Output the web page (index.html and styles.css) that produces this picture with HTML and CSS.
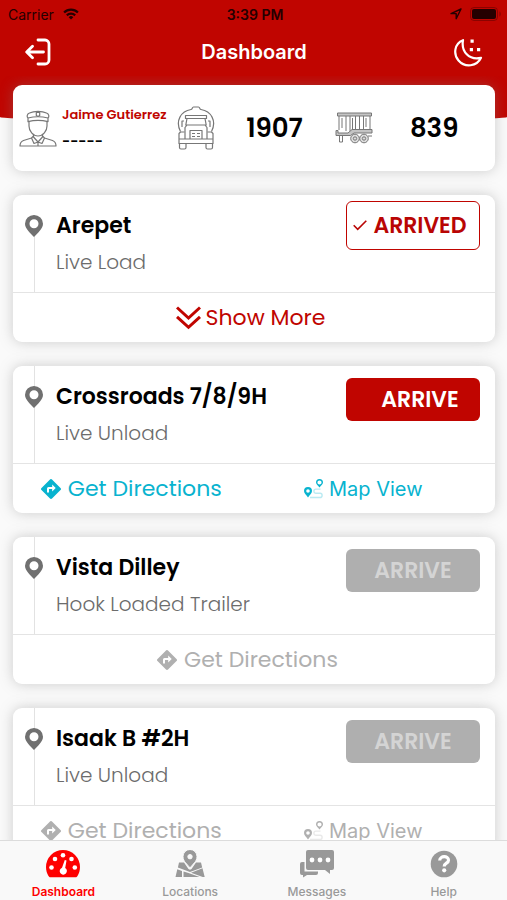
FILE: index.html
```html
<!DOCTYPE html>
<html lang="en">
<head>
<meta charset="utf-8">
<meta name="viewport" content="width=device-width, initial-scale=1">
<title>Dashboard</title>
<link rel="stylesheet" href="styles.css">
</head>
<body>
<svg class="sprite" aria-hidden="true">
  <symbol id="pin" viewBox="0 0 18 22"><circle cx="9" cy="8.700" r="6" fill="#fff"/><path fill="currentColor" fill-rule="evenodd" d="M9 0a9 8.700 0 0 0-9 8.700C0 14 6 18.500 9 22c3-3.500 9-8 9-13.300A9 8.700 0 0 0 9 0Zm0 4.200a4.500 4.500 0 1 1 0 9 4.500 4.500 0 0 1 0-9Z"/></symbol>
  <symbol id="directions" viewBox="0 0 20 20"><path fill="currentColor" fill-rule="evenodd" d="M9 .5a1.400 1.400 0 0 1 2 0L19.500 9a1.400 1.400 0 0 1 0 2L11 19.500a1.400 1.400 0 0 1-2 0L.5 11a1.400 1.400 0 0 1 0-2ZM11.200 5.500V8H7.500A1.500 1.500 0 0 0 6 9.500v4h2V10h3.200v2.500L14.700 9Z"/></symbol>
  <symbol id="route" viewBox="0 0 20 20">
    <path d="M6 18.500h10a2 2 0 0 0 0-4.200h-4a2 2 0 0 1 0-4.200h4.500" fill="none" stroke="currentColor" stroke-width="1.400" opacity=".28"/>
    <path fill="currentColor" fill-rule="evenodd" d="M4 8a4 4 0 0 0-4 4c0 2.600 2.500 4 4 6.500C5.500 16 8 14.600 8 12a4 4 0 0 0-4-4Zm0 2.200a1.800 1.800 0 1 1 0 3.600 1.800 1.800 0 0 1 0-3.600Z"/>
    <path fill="currentColor" fill-rule="evenodd" d="M15.500 0A3.500 3.500 0 0 0 12 3.500c0 2 2.300 3 3.500 5 1.200-2 3.500-3 3.500-5A3.500 3.500 0 0 0 15.500 0Zm0 1.400a2.100 2.100 0 1 1 0 4.200 2.100 2.100 0 0 1 0-4.200Z"/>
  </symbol>
</svg>

<header class="top">
  <div class="status">
    <span class="carrier">Carrier
      <svg width="18" height="12" viewBox="0 0 18 13" fill="none" stroke="currentColor" stroke-width="2.400"><path d="M1.500 4.800a10.500 10.500 0 0 1 15 0M4.500 8a6.300 6.300 0 0 1 9 0"/><path d="M9 12.500 6.500 10a3.500 3.500 0 0 1 5 0Z" fill="currentColor" stroke="none"/></svg>
    </span>
    <time class="clock">3:39 PM</time>
    <span class="indicators">
      <svg width="12" height="12" viewBox="0 0 12 12" fill="none" stroke="currentColor" stroke-width="1.400" stroke-linejoin="round"><path d="M11 1 1 5.600h5.200v5.200Z"/></svg>
      <svg width="32" height="14" viewBox="0 0 32 14"><rect x=".5" y=".5" width="27" height="13" rx="3.500" fill="none" stroke="currentColor" opacity=".35"/><rect x="2" y="2" width="24" height="10" rx="2" fill="currentColor"/><path d="M29.500 4.500c1.500.6 1.500 4.400 0 5Z" fill="currentColor" opacity=".4"/></svg>
    </span>
  </div>
  <div class="titlebar">
    <button class="icon-button" aria-label="Log out">
      <svg width="26" height="28" viewBox="0 0 26 28" fill="none" stroke="currentColor" stroke-width="2.800" stroke-linecap="round" stroke-linejoin="round"><path d="M13 2h7a4 4 0 0 1 4 4v16a4 4 0 0 1-4 4h-7M18.500 14H2M7.500 8.200 1.700 14l5.800 5.800"/></svg>
    </button>
    <h1>Dashboard</h1>
    <button class="icon-button" aria-label="Night mode">
      <svg width="29" height="29" viewBox="0 0 29 29"><path d="M9 2.200C.5 5.500-1 16 4.500 22.500c6.500 7.500 18.500 6 22.500-2.700C15 22.500 7 13.500 9 2.200Z" fill="none" stroke="currentColor" stroke-width="2.200" stroke-linejoin="round"/><path fill="currentColor" d="M16.500 1.500h3.200v3.200h-3.200zM15.800 10H19v3.200h-3.200zM23 10h3.200v3.200H23z"/></svg>
    </button>
  </div>
</header>

<main class="content">
  <section class="summary">
    <div class="driver">
      <svg width="38" height="37" viewBox="0 0 38 37" fill="none" stroke="currentColor" stroke-width="1.200" stroke-linejoin="round"><path d="M9 8C7.500 6.500 8 4 10.500 3 15 .7 23 .7 27.500 3 30 4 30.500 6.500 29 8c-6-1.500-14-1.500-20 0Zm0 0v3.700c6-1.500 14-1.500 20 0V8M10 11.500V16c0 5 4 10 9 10s9-5 9-10v-4.500"/><path d="M17.300 2.500h3.400v3L19 6.500l-1.700-1ZM14.500 24.500V27l4.500 5 4.500-5v-2.500M14.500 26l-2 2 2.500 5.500 4-1.500 4 1.500 2.500-5.500-2-2M12.500 28 4.500 30.500C2 31.500 1 33.500 1 36h36c0-2.500-1-4.500-3.500-5.500l-8-2.500M19 32v4"/></svg>
      <div class="driver-text"><strong>Jaime Gutierrez</strong><span>-----</span></div>
    </div>
    <div class="unit truck">
      <svg width="38" height="44" viewBox="0 0 38 44" fill="none" stroke="currentColor" stroke-width="1.200" stroke-linejoin="round"><path d="M3.500 25.500C-2 15 4 5 14 3.500c1.500 0 1-2.500 2.500-2.500h5C23 1 22.500 3.500 24 3.500 34 5 40 15 34.500 25.500"/><path d="M8.500 9.500h21v3h-21ZM10 12.500 8.800 19h20.400L28 12.500M8 33V21.500L10 19h18l2 2.500V33"/><path d="M13 24.500h12V33H13ZM15 27.500h3M20 27.500h3M15 30.500h3M20 30.500h3M7.500 26h-4L2 27.500V33h34v-5.500L34.500 26h-4M2 33v4.500h34V33M7 15H5v6M31 15h2v6"/><path d="M2.500 37.500v4A1.500 1.500 0 0 0 4 43h3.500A1.500 1.500 0 0 0 9 41.500v-4M29 37.500v4a1.500 1.500 0 0 0 1.500 1.500H34a1.500 1.500 0 0 0 1.500-1.500v-4"/></svg>
      <b>1907</b>
    </div>
    <div class="unit trailer">
      <svg width="38" height="32" viewBox="0 0 38 32" fill="none" stroke="currentColor" stroke-width="1"><path d="M2.500 1h34v3h-34Z" fill="#c4c4c4"/><path d="M4 4v14M7 6v10M11 4v15M15 4v15M17.500 6v11M20.500 4v13M24.500 4v13M28.500 4v13M31 6v9M35 4v14"/><path d="M1 18.500h2V21h10l4-3.500h20V21H19l-3.500 2.500H1Z" fill="#c4c4c4"/><path d="M4.500 23.500h3V30h-3ZM33 24h4"/><circle cx="20" cy="26.500" r="4.300" fill="#ddd"/><circle cx="29" cy="26.500" r="4.300" fill="#ddd"/><circle cx="20" cy="26.500" r="1.700"/><circle cx="29" cy="26.500" r="1.700"/></svg>
      <b>839</b>
    </div>
  </section>

  <article class="stop first">
    <div class="stop-main">
      <div class="rail"><svg width="18" height="22"><use href="#pin"/></svg></div>
      <div class="stop-text"><h2>Arepet</h2><p>Live Load</p></div>
      <button class="arrive arrived"><svg width="14" height="11" viewBox="0 0 14 11" fill="none" stroke="currentColor" stroke-width="1.600"><path d="m.7 5.300 4 4L13.300.8"/></svg>ARRIVED</button>
    </div>
    <div class="stop-actions">
      <button class="action more"><svg width="25" height="24" viewBox="0 0 25 24" fill="none" stroke="currentColor" stroke-width="3"><path d="m1 1.500 11.500 10.500L24 1.500M1 10.800l11.500 10.500L24 10.800"/></svg>Show More</button>
    </div>
  </article>

  <article class="stop">
    <div class="stop-main">
      <div class="rail"><svg width="18" height="22"><use href="#pin"/></svg></div>
      <div class="stop-text"><h2>Crossroads 7/8/9H</h2><p>Live Unload</p></div>
      <button class="arrive ready">ARRIVE</button>
    </div>
    <div class="stop-actions pair">
      <a class="action" href="#directions-1"><svg width="20" height="20"><use href="#directions"/></svg>Get Directions</a>
      <a class="action map" href="#map-1"><svg width="20" height="20"><use href="#route"/></svg>Map View</a>
    </div>
  </article>

  <article class="stop muted">
    <div class="stop-main">
      <div class="rail"><svg width="18" height="22"><use href="#pin"/></svg></div>
      <div class="stop-text"><h2>Vista Dilley</h2><p>Hook Loaded Trailer</p></div>
      <button class="arrive" disabled>ARRIVE</button>
    </div>
    <div class="stop-actions">
      <a class="action" href="#directions-2"><svg width="20" height="20"><use href="#directions"/></svg>Get Directions</a>
    </div>
  </article>

  <article class="stop muted">
    <div class="stop-main">
      <div class="rail"><svg width="18" height="22"><use href="#pin"/></svg></div>
      <div class="stop-text"><h2>Isaak B #2H</h2><p>Live Unload</p></div>
      <button class="arrive" disabled>ARRIVE</button>
    </div>
    <div class="stop-actions pair">
      <a class="action" href="#directions-3"><svg width="20" height="20"><use href="#directions"/></svg>Get Directions</a>
      <a class="action map" href="#map-3"><svg width="20" height="20"><use href="#route"/></svg>Map View</a>
    </div>
  </article>
</main>

<nav class="tabs">
  <a class="tab active" href="#dashboard">
    <svg width="34" height="28" viewBox="0 0 34 28"><path fill="currentColor" d="M17 0A17 17 0 0 0 0 17c0 3.500 1 6.500 2.500 9 .6 1 1 1.200 2 1.200h25c1 0 1.400-.2 2-1.200 1.500-2.500 2.500-5.500 2.500-9A17 17 0 0 0 17 0Z"/><g fill="#fff"><circle cx="5.500" cy="17.500" r="2.300"/><circle cx="9" cy="9" r="2.300"/><circle cx="17" cy="5.300" r="2.300"/><circle cx="25.500" cy="9" r="2.300"/><circle cx="28.800" cy="17.500" r="2.300"/><path d="m18.800 10 1.700.4-1.300 7.600a3.600 3.600 0 1 1-3.200-.3Z"/></g></svg>
    Dashboard
  </a>
  <a class="tab" href="#locations">
    <svg width="30" height="28" viewBox="0 0 30 28"><path fill="currentColor" d="M4 12.500h5L13.500 19l1.500.8 1.500-.8 4.500-6.500h5l1.200 5L15 22 2.900 17.500ZM2.300 19.300 7 21v6H.5ZM8.500 21.500l5 1.500L24.500 27h-16ZM16 22.800l11.500-4.600L29.700 27h-2Z"/><path fill="currentColor" stroke="#f9f9f9" stroke-width="1" fill-rule="evenodd" d="M15-.5a7 7 0 0 0-7 7.200c0 5 4.500 7.500 7 11.300 2.500-3.800 7-6.300 7-11.300a7 7 0 0 0-7-7.200Zm0 5a2.200 2.200 0 1 1 0 4.400 2.200 2.200 0 0 1 0-4.400Z"/></svg>
    Locations
  </a>
  <a class="tab" href="#messages">
    <svg width="34" height="28" viewBox="0 0 34 28"><path fill="currentColor" d="M8 0h24a2 2 0 0 1 2 2v16a2 2 0 0 1-2 2h-2v4l-5-4H8a2 2 0 0 1-2-2V2a2 2 0 0 1 2-2ZM2 12h2.500v9.500H18V23a2 2 0 0 1-2 2H7l-4 2.500V25H2a2 2 0 0 1-2-2v-9a2 2 0 0 1 2-2Z"/><g fill="#fff"><circle cx="12" cy="10" r="2.400"/><circle cx="20" cy="10" r="2.400"/><circle cx="28" cy="10" r="2.400"/></g></svg>
    Messages
  </a>
  <a class="tab" href="#help">
    <svg width="28" height="28" viewBox="0 0 28 28"><circle cx="14" cy="14" r="13.300" fill="currentColor"/><path d="M9.700 10.500c.2-5 8.800-5 8.800-.3 0 3.200-4.300 2.800-4.300 6.300" fill="none" stroke="#fff" stroke-width="3.200"/><circle cx="14.200" cy="20.300" r="2.100" fill="#fff"/></svg>
    Help
  </a>
</nav>
</body>
</html>
```
FILE: styles.css
```css
* { box-sizing: border-box; }

body {
  margin: 0;
  height: 100vh;
  display: flex;
  flex-direction: column;
  overflow: hidden;
  background: #fafafa;
  color: #000;
  font-family: Poppins, Inter, "Liberation Sans", sans-serif;
}

button {
  font: inherit;
  color: inherit;
  background: none;
  border: 0;
  padding: 0;
}

a { text-decoration: none; color: inherit; }
svg { display: block; flex: none; }
.sprite { position: absolute; width: 0; height: 0; }
h1, h2, p { margin: 0; }

.top {
  flex: none;
  background: #c00500;
  color: #fff;
  padding-bottom: 45px;
  border-radius: 0 0 50% 50% / 0 0 4px 4px;
  font-family: Inter, "Liberation Sans", sans-serif;
}

.status {
  display: grid;
  grid-template-columns: 1fr auto 1fr;
  align-items: center;
  height: 28px;
  padding: 0 5px 0 8px;
  color: #250000;
  font-size: 14px;
}

.carrier { display: flex; align-items: center; gap: 8px; }
.clock { font-weight: 600; }
.indicators { display: flex; align-items: center; justify-content: flex-end; gap: 8px; }

.titlebar {
  display: grid;
  grid-template-columns: 1fr auto 1fr;
  align-items: center;
  height: 48px;
  padding: 0 24px 0 25px;
}

.titlebar h1 { font-size: 20px; font-weight: 600; }
.icon-button:last-child { justify-self: end; }

.content {
  flex: 1;
  min-height: 0;
  overflow: hidden auto;
  scrollbar-width: none;
  display: flex;
  flex-direction: column;
  gap: 24px;
  margin-top: -45px;
  padding: 9px 12px 0 13px;
}

.summary, .stop {
  flex: none;
  background: #fff;
  border-radius: 9px;
  box-shadow: 0 0 14px rgba(130, 130, 130, 0.38);
}

.summary {
  display: grid;
  grid-template-columns: repeat(3, 1fr);
  align-items: center;
  height: 86px;
}

.driver, .unit { display: flex; align-items: center; color: #777; }
.driver { gap: 5px; padding-left: 6px; }
.driver-text { display: flex; flex-direction: column; gap: 6px; white-space: nowrap; }
.driver-text strong { color: #c00500; font-size: 13px; line-height: 20px; font-weight: 600; }
.driver-text span { color: #000; font-size: 14px; line-height: 20px; font-weight: 600; }
.unit b { flex: 1; text-align: center; color: #000; font-size: 26px; font-weight: 600; }
.truck { padding-left: 3px; }
.trailer { padding-left: 1px; }

.stop-main {
  display: flex;
  height: 98px;
  padding: 0 15px 0 12px;
  border-bottom: 1px solid #e4e4e4;
}

.rail {
  width: 19px;
  padding-top: 20px;
  color: #707070;
  background: linear-gradient(#e2e2e2, #e2e2e2) 9px 0 / 1px 100% no-repeat;
}

.first .rail { background-position: 9px 36px; }

.stop-text { flex: 1; min-width: 0; padding: 16px 0 0 12px; }
.stop-text h2 { font-size: 22px; line-height: 30px; font-weight: 600; }
.stop-text p { margin-top: 6px; font-size: 20px; line-height: 30px; font-weight: 300; color: #6c6c6c; }

.arrive {
  display: flex;
  align-items: center;
  justify-content: center;
  width: 134px;
  height: 43px;
  margin-top: 12px;
  border-radius: 6px;
  background: #afafaf;
  color: #d4d4d4;
  font-size: 22px;
  font-weight: 600;
}

.arrive.ready { background: #c00500; color: #fff; padding-left: 14px; }

.arrive.arrived {
  gap: 6px;
  height: 49px;
  margin-top: 6px;
  padding-right: 6px;
  border: 1px solid #c00500;
  background: #fff;
  color: #b90504;
}

.stop-actions {
  display: grid;
  height: 49px;
  padding-right: 13px;
}

.stop-actions.pair { grid-template-columns: 52fr 50fr; padding-right: 18px; }
.first .stop-actions { padding-right: 7px; }

.action {
  display: flex;
  align-items: center;
  justify-content: center;
  gap: 7px;
  color: #08b3cf;
  font-size: 22px;
}

.action.more { color: #c00500; gap: 5px; }
.action.map { gap: 5px; font-size: 20px; font-family: Inter, "Liberation Sans", sans-serif; }
.muted .action { color: #b0b0b0; }

.tabs {
  flex: none;
  position: relative;
  display: grid;
  grid-template-columns: repeat(4, 1fr);
  height: 60px;
  background: #f9f9f9;
  border-top: 1px solid #dcdcdc;
  font-family: Inter, "Liberation Sans", sans-serif;
}

.tab {
  display: flex;
  flex-direction: column;
  align-items: center;
  gap: 6px;
  padding-top: 9px;
  color: #999;
  font-size: 12px;
  line-height: 16px;
  font-weight: 500;
}

.tab.active { color: #fe0000; font-weight: 600; }
```
